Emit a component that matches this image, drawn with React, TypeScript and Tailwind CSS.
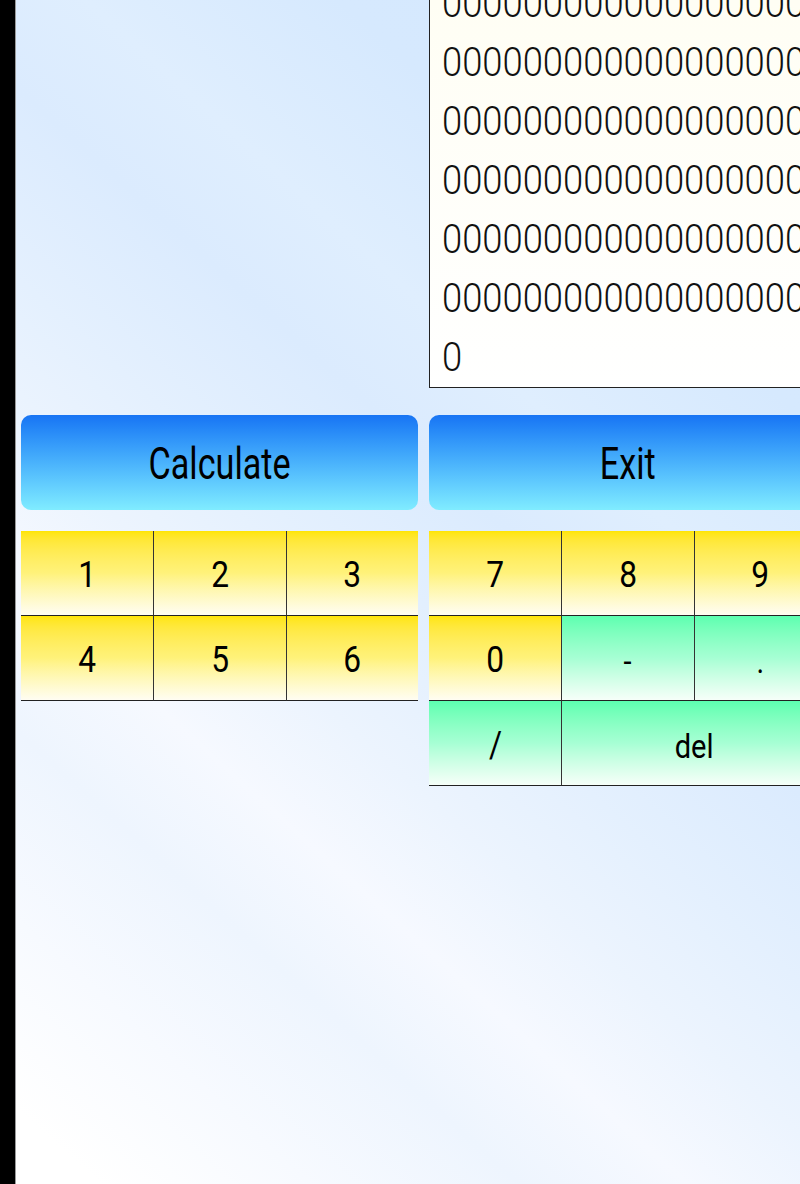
const zeroLine = "0000000000000000000000";

const lines = [zeroLine, zeroLine, zeroLine, zeroLine, zeroLine, zeroLine, "0"];

type KeyProps = {
  label: string;
  tone?: "yellow" | "green";
  span?: boolean;
  divider?: boolean;
  size?: "lg" | "sm";
};

function Key({ label, tone = "yellow", span = false, divider = false, size = "lg" }: KeyProps) {
  return (
    <div
      className={
        "flex h-[85px] items-center justify-center border-b-[1.5px] border-[#222] " +
        (tone === "yellow"
          ? "bg-gradient-to-b from-[#ffe500] via-[#fff27a] to-[#fffdf2] "
          : "bg-gradient-to-b from-[#5cffb0] via-[#a6ffd4] to-[#f6fff9] ") +
        (span ? "col-span-2 " : "") +
        (divider ? "border-l border-l-[#333]" : "")
      }
    >
      <span
        className={
          "inline-block scale-x-[0.88] text-black " +
          (size === "lg" ? "mt-[4px] text-[36px]" : "mt-[8px] text-[33px]")
        }
      >
        {label}
      </span>
    </div>
  );
}

function BlueButton({ label }: { label: string }) {
  return (
    <button className="flex h-[95px] w-full items-center justify-center rounded-[10px] bg-gradient-to-b from-[#1874f4] to-[#80ecff]">
      <span className="mt-[3px] inline-block scale-x-[0.76] text-[45px] text-black">{label}</span>
    </button>
  );
}

export default function App() {
  return (
    <div
      className="flex h-[1184px] w-[800px] overflow-hidden"
      style={{ fontFamily: "Roboto, 'Noto Sans', sans-serif" }}
    >
      <div className="w-[16px] shrink-0 border-r border-[#9a9a9a] bg-black" />

      <main className="flex-1 overflow-hidden bg-[linear-gradient(222deg,#d4e8fe_0%,#d6e9fe_22%,#dfeefe_34%,#dbebfe_42%,#e4f0fe_52%,#ecf4fe_60%,#f6f9ff_68%,#eef5fe_76%,#f7faff_86%,#ffffff_96%)] pl-[5px]">
        <div className="grid w-[805px] grid-cols-[397px_397px] gap-x-[11px]">
          <div />
          <div className="flex h-[388px] flex-col justify-end overflow-hidden border-b border-l border-[#222] bg-gradient-to-b from-[#fffef4] to-[#ffffff] pl-[12px]">
            {lines.map((line, i) => (
              <div
                key={i}
                className="origin-left scale-x-[0.887] whitespace-nowrap text-[41px] font-light leading-[59px] text-[#111]"
              >
                {line}
              </div>
            ))}
          </div>

          <div className="mt-[27px]">
            <BlueButton label="Calculate" />
          </div>
          <div className="mt-[27px]">
            <BlueButton label="Exit" />
          </div>

          <div className="mt-[21px] grid grid-cols-3 self-start">
            <Key label="1" />
            <Key label="2" divider />
            <Key label="3" divider />
            <Key label="4" />
            <Key label="5" divider />
            <Key label="6" divider />
          </div>

          <div className="mt-[21px] grid grid-cols-3 self-start">
            <Key label="7" />
            <Key label="8" divider />
            <Key label="9" divider />
            <Key label="0" />
            <Key label="-" tone="green" divider size="sm" />
            <Key label="." tone="green" divider size="sm" />
            <Key label="/" tone="green" />
            <Key label="del" tone="green" span divider size="sm" />
          </div>
        </div>
      </main>
    </div>
  );
}
